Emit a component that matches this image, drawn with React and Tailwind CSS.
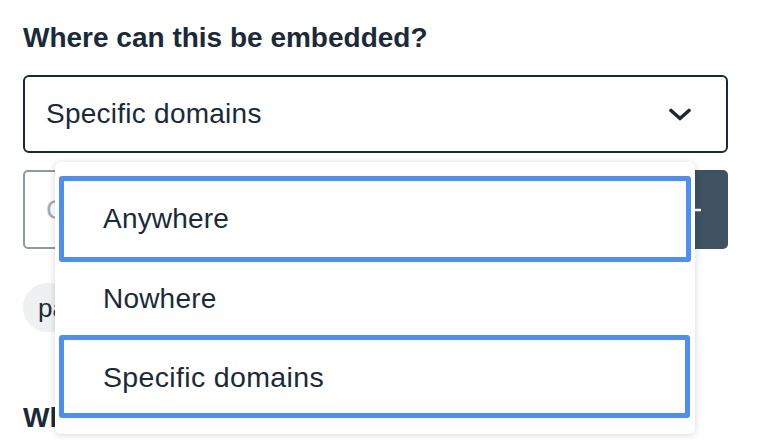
import React from "react";

export default function App() {
  return (
    <div
      className="relative w-[762px] h-[448px] overflow-hidden bg-white pl-[23px] pr-[34px] text-[#1b2a38]"
      style={{ fontFamily: '"Liberation Sans", Arial, sans-serif' }}
    >
      <h2 className="pt-[21px] text-[28px] leading-[34px] font-bold">Where can this be embedded?</h2>

      <div className="mt-[20px] h-[78px] border-2 border-[#1b2a38] rounded-[6px] flex items-center justify-between pl-[21px] pr-[35px]">
        <span className="text-[28px] leading-[34px] tracking-[0.25px]">Specific domains</span>
        <svg width="22" height="13" viewBox="0 0 22 13" fill="none">
          <path d="M2 2.5 L11 10.5 L20 2.5" stroke="#1b2a38" strokeWidth="3.6" strokeLinecap="round" strokeLinejoin="round" />
        </svg>
      </div>

      <div className="mt-[17px] flex h-[79px]">
        <div className="flex-1 border-2 border-[#8e99a3] rounded-l-[5px] flex items-center pl-[21px]">
          <span className="text-[28px] leading-[34px] text-[#a3abb3]">Custom domain</span>
        </div>
        <div className="w-[72px] bg-[#3e5262] rounded-r-[5px] flex items-center justify-center">
          <svg width="18" height="18" viewBox="0 0 18 18">
            <path d="M9 1 V17 M1 9 H17" stroke="white" strokeWidth="2.6" strokeLinecap="round" />
          </svg>
        </div>
      </div>

      <div className="mt-[34px] inline-flex h-[49px] items-center rounded-full bg-[#eef0f2] px-[15px]">
        <span className="text-[26px] leading-[30px]">partner-site.com</span>
      </div>

      <h2 className="mt-[69px] text-[28px] leading-[34px] font-bold">Who can see this?</h2>

      <div className="absolute left-[55px] top-[162px] w-[640px] h-[272px] bg-white rounded-[6px] shadow-[0_1px_7px_rgba(0,0,0,0.16)] pt-[14px] px-[4px]">
        <div className="h-[86px] border-[5px] border-[#4d8ef3] rounded-[3px] flex items-center pl-[39px]">
          <span className="text-[28px] leading-[34px] tracking-[0.2px]">Anywhere</span>
        </div>
        <div className="h-[73px] flex items-center pl-[44px]">
          <span className="text-[28px] leading-[34px] tracking-[0.2px]">Nowhere</span>
        </div>
        <div className="h-[83px] mr-[1px] border-[5px] border-[#4d8ef3] rounded-[3px] flex items-center pl-[39px]">
          <span className="text-[28.5px] leading-[34px] tracking-[0.35px]">Specific domains</span>
        </div>
      </div>
    </div>
  );
}
